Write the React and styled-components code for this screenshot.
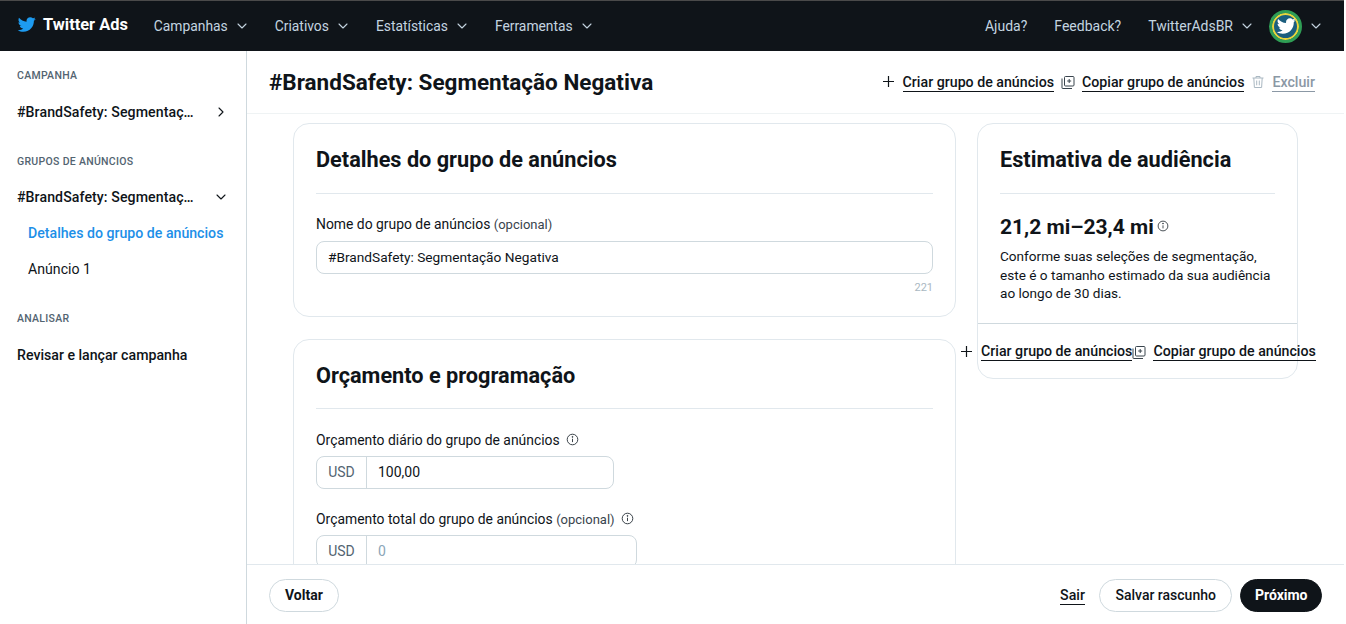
import React from 'react';
import styled, { createGlobalStyle } from 'styled-components';
import { ChevronDown, ChevronRight } from 'lucide-react';

const GlobalStyle = createGlobalStyle`
  html, body { margin: 0; padding: 0; height: 100%; background: #fff; overflow: hidden; }
  * { box-sizing: border-box; }
  body { font-family: Roboto, "Liberation Sans", sans-serif; color: #0f1419; }
`;

const BIRD = 'M23.643 4.937c-.835.37-1.732.62-2.675.733.962-.576 1.7-1.49 2.048-2.578-.9.534-1.897.922-2.958 1.13-.85-.904-2.06-1.47-3.4-1.47-2.572 0-4.658 2.086-4.658 4.66 0 .364.042.718.12 1.06-3.873-.195-7.304-2.05-9.602-4.868-.4.69-.63 1.49-.63 2.342 0 1.616.823 3.043 2.072 3.878-.764-.025-1.482-.234-2.11-.583v.06c0 2.257 1.605 4.14 3.737 4.568-.392.106-.803.162-1.227.162-.3 0-.593-.028-.877-.082.593 1.85 2.313 3.198 4.352 3.234-1.595 1.25-3.604 1.995-5.786 1.995-.376 0-.747-.022-1.112-.065 2.062 1.323 4.51 2.093 7.14 2.093 8.57 0 13.255-7.098 13.255-13.254 0-.2-.005-.402-.014-.602.91-.658 1.7-1.477 2.323-2.41z';

const Page = styled.div`
  width: 1344px;
  height: 624px;
  display: flex;
  flex-direction: column;
  position: relative;
  overflow: hidden;
`;

const Navbar = styled.header`
  height: 51px;
  flex: none;
  background: #0f1419;
  border-top: 1px solid #4a4a4a;
  display: flex;
  align-items: center;
  padding: 0 20px 0 17px;
`;

const Logo = styled.div`
  display: flex;
  align-items: center;
  gap: 7px;
  margin-right: 26px;
  margin-top: -3px;
  color: #fff;
  font-weight: 700;
  font-size: 16.4px;
`;

const NavGroup = styled.nav`
  display: flex;
  align-items: center;
  gap: ${p => (p.$end ? 27 : 25)}px;
  margin-left: ${p => (p.$end ? 'auto' : '0')};
  font-size: ${p => (p.$end ? 14 : 13.85)}px;
`;

const NavItem = styled.div`
  display: flex;
  align-items: center;
  gap: 6px;
  color: #c4d4e0;
  margin-left: ${p => p.$pull || 0}px;
`;

const Avatar = styled.div`
  width: 33px;
  height: 33px;
  border-radius: 50%;
  background: #1b5e7e;
  border: 3px solid #2f9e55;
  box-shadow: inset 0 0 0 2px #e8d53c;
  display: flex;
  align-items: center;
  justify-content: center;
`;

const Body = styled.div`
  flex: 1;
  display: flex;
  min-height: 0;
`;

const Sidebar = styled.aside`
  width: 247px;
  flex: none;
  border-right: 1px solid #cfd9de;
  padding: 19px 17px 0;
`;

const SideHeading = styled.div`
  font-size: 10.5px;
  font-weight: 500;
  color: #536471;
  letter-spacing: 0.3px;
  line-height: 12px;
  margin-bottom: ${p => p.$gap || 20}px;
`;

const SideRow = styled.div`
  display: flex;
  align-items: center;
  justify-content: space-between;
  height: 20px;
  font-size: 14.15px;
  font-weight: 500;
  margin-bottom: ${p => p.$gap || 0}px;
  span {
    width: 180px;
    letter-spacing: 0.08px;
    overflow: hidden;
    text-overflow: ellipsis;
    white-space: nowrap;
  }
`;

const SubLink = styled.div`
  font-size: 14.15px;
  line-height: 20px;
  margin-left: 11px;
  margin-bottom: ${p => p.$gap || 16}px;
  font-weight: ${p => (p.$active ? 500 : 400)};
  color: ${p => (p.$active ? '#1d8fe8' : '#0f1419')};
`;

const Main = styled.main`
  flex: 1;
  min-width: 0;
  display: flex;
  flex-direction: column;
`;

const TitleBar = styled.div`
  height: 63px;
  flex: none;
  border-bottom: 1px solid #eff3f4;
  display: flex;
  align-items: center;
  justify-content: space-between;
  padding: 0 29px 0 22px;
`;

const Title = styled.h1`
  margin: 0;
  font-size: 22.5px;
  font-weight: 700;
`;

const Actions = styled.div`
  display: flex;
  align-items: center;
  gap: ${p => p.$gap || 0}px;
`;

const ActionLink = styled.span`
  font-size: 14.2px;
  font-weight: 500;
  line-height: 18px;
  color: ${p => (p.$muted ? '#8b98a5' : '#0f1419')};
  border-bottom: 1px solid ${p => (p.$muted ? '#8b98a5' : '#0f1419')};
  margin-left: ${p => p.$lead || 0}px;
  white-space: nowrap;
`;

const Content = styled.div`
  flex: 1;
  min-height: 0;
  overflow: hidden;
  display: flex;
  align-items: flex-start;
  gap: 21px;
  padding: 9px 0 0 46px;
`;

const Column = styled.div`
  display: flex;
  flex-direction: column;
  gap: 22px;
  width: 663px;
  flex: none;
`;

const Card = styled.section`
  width: ${p => p.$width || 'auto'};
  flex: none;
  border: 1px solid #e1e8ed;
  border-radius: 16px;
  padding: 0 22px;
  height: ${p => p.$height || 'auto'};
`;

const CardTitle = styled.h2`
  margin: 0 0 ${p => p.$gap || 20}px;
  height: ${p => p.$height || 70}px;
  padding-top: 2px;
  display: flex;
  align-items: center;
  font-size: 21.7px;
  font-weight: 700;
  border-bottom: 1px solid #e1e8ed;
`;

const Label = styled.div`
  font-size: 13.9px;
  line-height: 20px;
  margin-bottom: ${p => p.$gap || 6}px;
  span { color: #39444d; font-size: 13px; }
  svg { margin: 0 0 3px 3px; vertical-align: middle; }
`;

const TextField = styled.div`
  height: 33px;
  border: 1px solid #cfd9de;
  border-radius: 8px;
  padding: 0 11px 1px;
  display: flex;
  align-items: center;
  font-size: 13.7px;
`;

const Counter = styled.div`
  text-align: right;
  font-size: 11px;
  line-height: 14px;
  color: #aab8c2;
  margin-top: 7px;
`;

const MoneyField = styled.div`
  width: ${p => p.$width}px;
  height: 33px;
  border: 1px solid #cfd9de;
  border-radius: 8px;
  display: flex;
  align-items: center;
  font-size: 14px;
  margin-bottom: ${p => p.$gap || 0}px;
`;

const Currency = styled.div`
  width: 50px;
  height: 100%;
  padding-bottom: 1px;
  border-right: 1px solid #cfd9de;
  display: flex;
  align-items: center;
  justify-content: center;
  color: #536471;
`;

const Amount = styled.div`
  padding: 0 0 1px 11px;
  color: ${p => (p.$placeholder ? '#8ba6b8' : '#0f1419')};
`;

const Estimate = styled.div`
  display: flex;
  align-items: center;
  gap: 3px;
  font-size: 21px;
  font-weight: 700;
  line-height: 26px;
  margin-top: 20px;
  svg { margin-top: -3px; }
`;

const EstimateText = styled.p`
  margin: 7px 0 20px;
  font-size: 13.6px;
  line-height: 18.5px;
  width: 275px;
`;

const CardRule = styled.div`
  margin: 0 -22px;
  border-top: 1px solid #cfd9de;
`;

const FloatingActions = styled(Actions)`
  position: absolute;
  left: 960px;
  top: 342px;
  z-index: 2;
`;

const Footer = styled.footer`
  height: 60px;
  flex: none;
  background: #fff;
  border-top: 1px solid #e1e8ed;
  display: flex;
  align-items: center;
  padding: 1px 22px 0;
`;

const Pill = styled.button`
  height: 33px;
  padding: 0 ${p => p.$pad || 15}px;
  border-radius: 17px;
  font-family: inherit;
  font-size: 14px;
  font-weight: ${p => (p.$medium ? 500 : 700)};
  background: ${p => (p.$primary ? '#0f1419' : '#fff')};
  color: ${p => (p.$primary ? '#fff' : '#0f1419')};
  border: 1px solid ${p => (p.$primary ? '#0f1419' : '#cfd9de')};
  margin-left: ${p => p.$lead || 0}px;
  margin-right: ${p => (p.$push ? 'auto' : '0')};
`;

const Bird = ({ size, color }) => (
  <svg width={size} height={size} viewBox="0 0 24 24" fill={color}>
    <path d={BIRD} />
  </svg>
);

const Info = ({ size = 13 }) => (
  <svg width={size} height={size} viewBox="0 0 14 14" fill="none" stroke="#2b343b" strokeWidth="1">
    <circle cx="7" cy="7" r="5.7" />
    <path d="M7 6.2v3.6" />
    <circle cx="7" cy="4.2" r=".5" fill="#2b343b" />
  </svg>
);

const PlusIcon = () => (
  <svg width="14" height="14" viewBox="0 0 14 14" fill="none" stroke="#0f1419" strokeWidth="1.2">
    <path d="M6.5 1v11M1 6.5h11" />
  </svg>
);

const CopyIcon = () => (
  <svg width="14" height="14" viewBox="0 0 14 14" fill="none" stroke="#39444d" strokeWidth="1">
    <rect x="3.5" y="1.5" width="9.5" height="9.5" rx="1" />
    <path d="M1 3.5v9.5a.5.5 0 0 0 .5.5h9.5M8.2 4v4M6.2 6h4" />
  </svg>
);

const TrashIcon = () => (
  <svg width="14" height="14" viewBox="0 0 14 14" fill="none" stroke="#aab8c2" strokeWidth="1">
    <path d="M1.5 3h11M5 3V1.5h4V3M2.8 3l.6 9.5h7.2l.6-9.5M5.7 5.5v4.8M8.3 5.5v4.8" />
  </svg>
);

const Chevron = () => <ChevronDown size={16} strokeWidth={1.6} />;

const CreateCopyLinks = ({ lead }) => (
  <>
    <PlusIcon />
    <ActionLink $lead={lead}>Criar grupo de anúncios</ActionLink>
    <CopyIcon />
    <ActionLink $lead={lead}>Copiar grupo de anúncios</ActionLink>
  </>
);

export default function App() {
  return (
    <Page>
      <GlobalStyle />
      <Navbar>
        <Logo>
          <Bird size={19} color="#1d9bf0" />
          Twitter Ads
        </Logo>
        <NavGroup>
          {['Campanhas', 'Criativos', 'Estatísticas', 'Ferramentas'].map(item => (
            <NavItem key={item}>{item}<Chevron /></NavItem>
          ))}
        </NavGroup>
        <NavGroup $end>
          <NavItem>Ajuda?</NavItem>
          <NavItem>Feedback?</NavItem>
          <NavItem>TwitterAdsBR<Chevron /></NavItem>
          <NavItem $pull={-13}>
            <Avatar><Bird size={20} color="#fff" /></Avatar>
            <Chevron />
          </NavItem>
        </NavGroup>
      </Navbar>
      <Body>
        <Sidebar>
          <SideHeading>CAMPANHA</SideHeading>
          <SideRow $gap={34}>
            <span>#BrandSafety: Segmentação Negativa</span>
            <ChevronRight size={16} strokeWidth={1.6} />
          </SideRow>
          <SideHeading $gap={19}>GRUPOS DE ANÚNCIOS</SideHeading>
          <SideRow $gap={16}>
            <span>#BrandSafety: Segmentação Negativa</span>
            <ChevronDown size={16} strokeWidth={1.6} />
          </SideRow>
          <SubLink $active>Detalhes do grupo de anúncios</SubLink>
          <SubLink $gap={34}>Anúncio 1</SubLink>
          <SideHeading>ANALISAR</SideHeading>
          <SideRow>Revisar e lançar campanha</SideRow>
        </Sidebar>
        <Main>
          <TitleBar>
            <Title>#BrandSafety: Segmentação Negativa</Title>
            <Actions $gap={7}>
              <CreateCopyLinks />
              <TrashIcon />
              <ActionLink $muted>Excluir</ActionLink>
            </Actions>
          </TitleBar>
          <Content>
            <Column>
              <Card $height="194px">
                <CardTitle>Detalhes do grupo de anúncios</CardTitle>
                <Label>Nome do grupo de anúncios <span>(opcional)</span></Label>
                <TextField>#BrandSafety: Segmentação Negativa</TextField>
                <Counter>221</Counter>
              </Card>
              <Card $height="300px">
                <CardTitle $height={69} $gap={21}>Orçamento e programação</CardTitle>
                <Label>Orçamento diário do grupo de anúncios <Info /></Label>
                <MoneyField $width={298} $gap={20}>
                  <Currency>USD</Currency>
                  <Amount>100,00</Amount>
                </MoneyField>
                <Label $gap={5}>Orçamento total do grupo de anúncios <span>(opcional)</span> <Info /></Label>
                <MoneyField $width={321}>
                  <Currency>USD</Currency>
                  <Amount $placeholder>0</Amount>
                </MoneyField>
              </Card>
            </Column>
            <Card $width="321px" $height="256px">
              <CardTitle>Estimativa de audiência</CardTitle>
              <Estimate>21,2 mi–23,4 mi <Info size={12} /></Estimate>
              <EstimateText>
                Conforme suas seleções de segmentação, este é o tamanho estimado da sua audiência ao longo de 30 dias.
              </EstimateText>
              <CardRule />
            </Card>
          </Content>
          <Footer>
            <Pill $push>Voltar</Pill>
            <ActionLink>Sair</ActionLink>
            <Pill $medium $lead={14} $pad={15.5}>Salvar rascunho</Pill>
            <Pill $primary $lead={8} $pad={13.5}>Próximo</Pill>
          </Footer>
        </Main>
      </Body>
      <FloatingActions>
        <CreateCopyLinks lead={7} />
      </FloatingActions>
    </Page>
  );
}
